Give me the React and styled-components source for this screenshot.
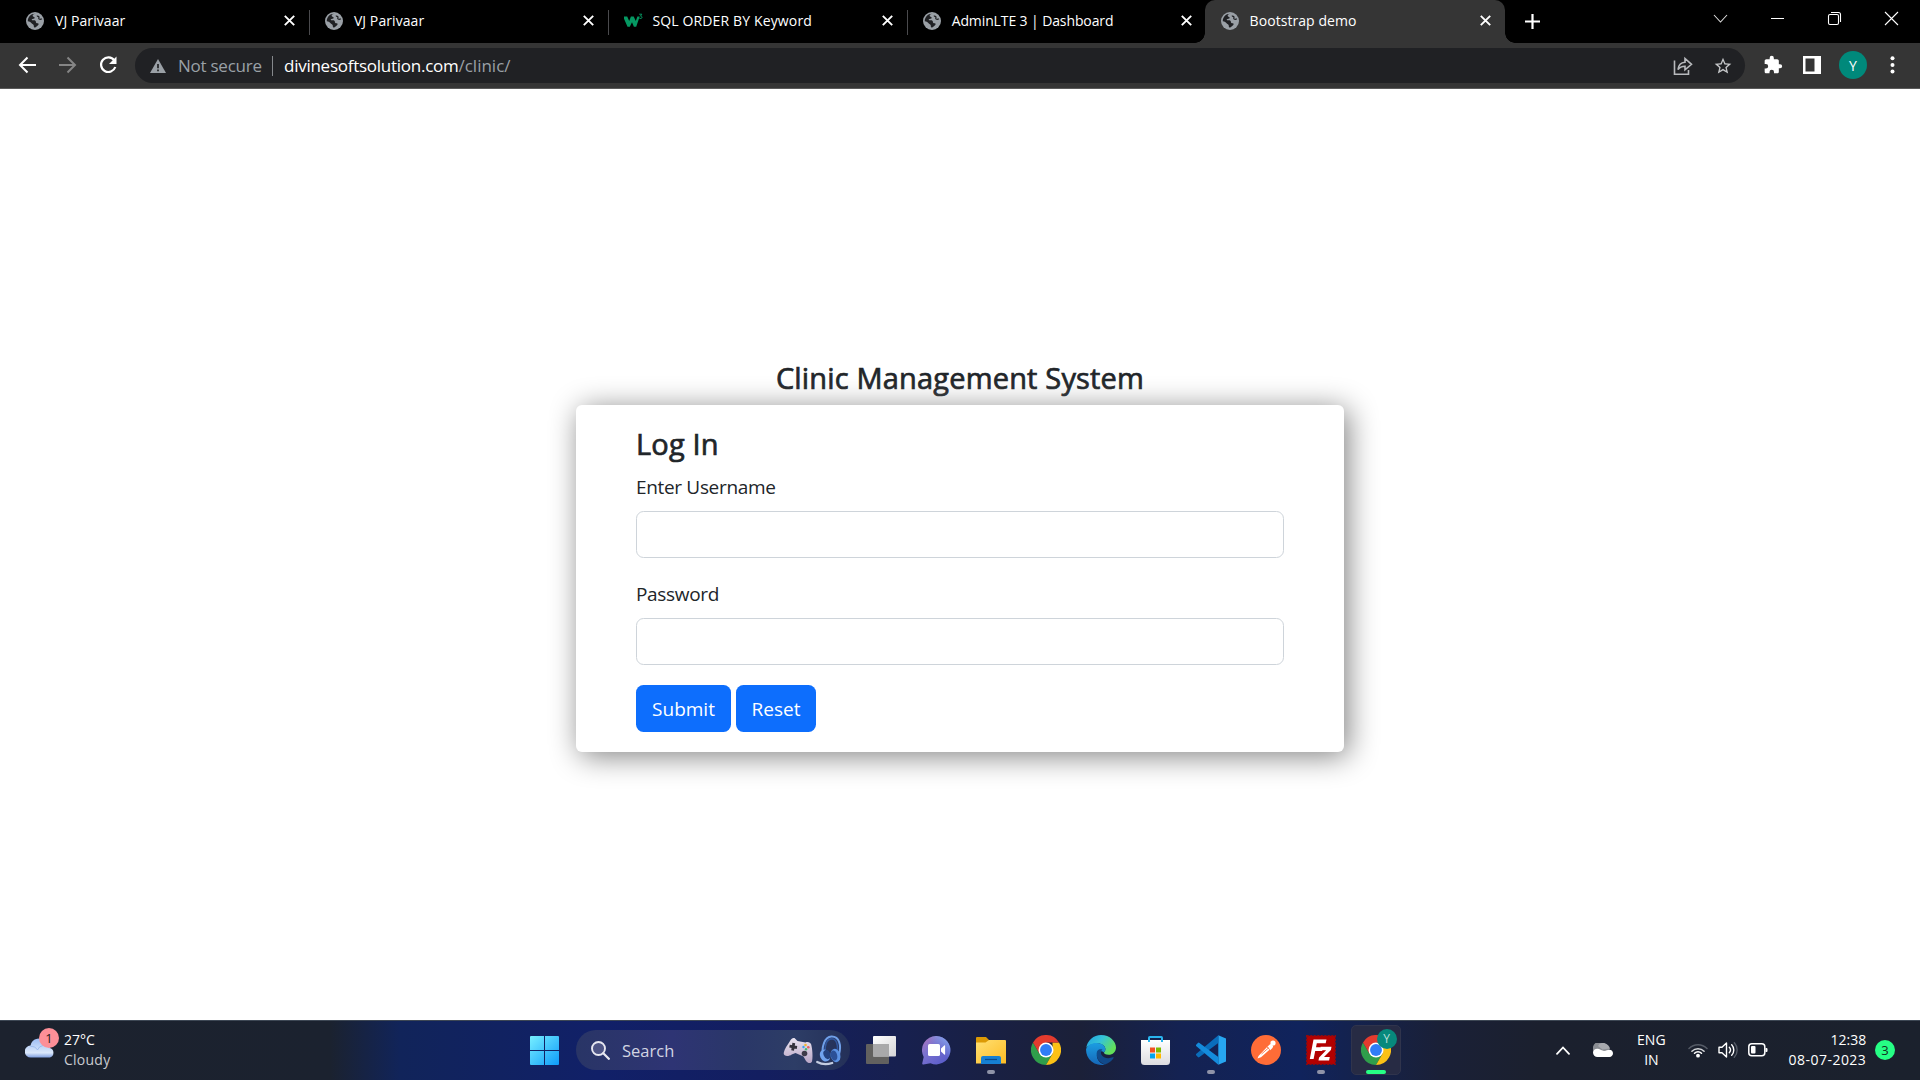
import React from "react";
import styled, { createGlobalStyle, css } from "styled-components";

const UI = '"Open Sans", "Noto Sans", sans-serif';

const GlobalStyle = createGlobalStyle`
  * { box-sizing: border-box; }
  html, body { margin: 0; padding: 0; background: #fff; }
  body { font-family: ${UI}; overflow: hidden; }
  svg { display: block; flex: none; }
`;

const Screen = styled.div`
  width: 1920px;
  height: 1080px;
  display: flex;
  flex-direction: column;
  overflow: hidden;
`;

const Label = styled.span`
  font-size: ${(p) => p.$size || 14}px;
  letter-spacing: ${(p) => p.$track || 0}px;
  color: ${(p) => p.$color || "#fff"};
  font-weight: ${(p) => p.$weight || 400};
  white-space: nowrap;
`;

/* ---------- tab strip ---------- */
const TabStrip = styled.div`
  height: 43px;
  background: #000;
  display: flex;
  padding-left: 9px;
  flex: none;
`;

const Tab = styled.div`
  width: 298.9px;
  height: 43px;
  display: flex;
  align-items: center;
  padding: 0 13px 2px 17px;
  position: relative;
  ${(p) => p.$active && css`
    width: 300px;
    padding-left: 16px;
    padding-right: 14px;
    background: #353535;
    border-radius: 10px 10px 0 0;
    &::before, &::after {
      content: "";
      position: absolute;
      bottom: 0;
      width: 10px;
      height: 10px;
    }
    &::before { left: -10px; background: radial-gradient(circle at 0 0, #000 9.5px, #353535 10px); }
    &::after { right: -10px; background: radial-gradient(circle at 100% 0, #000 9.5px, #353535 10px); }
  `}
`;

const TabTitle = styled(Label)`
  margin-left: ${(p) => p.$gap || 11}px;
  flex: 1;
  line-height: 20px;
`;

const TabDivider = styled.div`
  width: 1px;
  height: 25px;
  background: #4a4a4d;
  margin: 3px -15px 0 14px;
`;

const NewTab = styled.div`
  display: flex;
  align-items: center;
  margin-left: 20px;
  flex: 1;
`;

const WindowControls = styled.div`
  display: flex;
  padding: 11px 21.5px 0 0;
  gap: 42px;
`;

/* ---------- toolbar ---------- */
const Toolbar = styled.div`
  height: 46px;
  background: #353535;
  border-bottom: 1px solid #5a5a5a;
  display: flex;
  align-items: center;
  padding-left: 17px;
  flex: none;
`;

const NavButtons = styled.div`
  display: flex;
  gap: 20.3px;
  width: 118px;
  padding-bottom: 1px;
`;

const Omnibox = styled.div`
  width: 1610px;
  height: 35px;
  border-radius: 18px;
  background: #202124;
  display: flex;
  align-items: center;
  padding: 0 12px 0 15px;
`;

const Security = styled(Label)`
  margin-left: 12px;
  width: 83px;
`;

const OmniDivider = styled.div`
  width: 1px;
  height: 20px;
  background: #85888c;
  margin: 0 11px;
`;

const Url = styled.div`
  flex: 1;
  line-height: 24px;
  display: flex;
`;

const OmniActions = styled.div`
  display: flex;
  gap: 20px;
`;

const ToolActions = styled.div`
  display: flex;
  align-items: center;
  padding: 0 0 1px 18px;
  gap: 20px;
`;

const Avatar = styled.div`
  width: 28px;
  height: 28px;
  border-radius: 50%;
  background: #00897b;
  display: flex;
  align-items: center;
  justify-content: center;
  margin: 0 -3px 0 -2px;
`;

/* ---------- page ---------- */
const Page = styled.main`
  height: 931px;
  background: #fff;
  display: flex;
  flex-direction: column;
  align-items: center;
  padding-top: 270px;
  flex: none;
`;

const Heading = styled.h4`
  margin: 0 0 10px;
  padding-top: 1px;
  font-size: 29px;
  font-weight: 400;
  -webkit-text-stroke: 0.7px #212529;
  height: 36px;
  line-height: 36px;
  color: #212529;
  letter-spacing: 0.17px;
  white-space: nowrap;
`;

const Card = styled.form`
  width: 768px;
  height: 347px;
  padding: 20px 60px;
  border-radius: 6px;
  background: #fff;
  box-shadow: 4px 4px 30px gray;
`;

const FieldLabel = styled.label`
  display: block;
  font-size: 19px;
  height: 30px;
  line-height: 30px;
  padding-top: 1px;
  margin-bottom: 10px;
  color: #212529;
  letter-spacing: -0.33px;
`;

const Field = styled.input`
  display: block;
  width: 100%;
  height: 47px;
  border: 1px solid #ced4da;
  border-radius: 7.5px;
  margin: 0 0 20px;
  padding: 7px 15px;
  outline: none;
`;

const Buttons = styled.div`
  display: flex;
  gap: 5px;
`;

const Button = styled.button`
  width: ${(p) => p.$width}px;
  height: 47px;
  border: 0;
  padding: 0;
  border-radius: 7.5px;
  background: #0d6efd;
  color: #fff;
  font: 400 19px/30px ${UI};
`;

/* ---------- taskbar ---------- */
const Taskbar = styled.footer`
  height: 60px;
  border-top: 1px solid #3d4754;
  background: linear-gradient(90deg, #1c222e 0, #1b222f 330px, #11245a 400px, #112068 600px, #131e60 760px, #17204f 900px, #1b2038 1080px, #142252 1180px, #10235c 1300px, #1a2037 1440px, #1b202e 1540px, #1b212d 1920px);
  display: flex;
  flex: none;
`;

const Weather = styled.div`
  width: 517px;
  padding: 0 0 0 25px;
  display: flex;
`;

const WeatherIcon = styled.div`
  width: 39px;
  padding-top: 16px;
  position: relative;
`;

const AlertBadge = styled.div`
  position: absolute;
  left: 14px;
  top: 6.5px;
  width: 20px;
  height: 20px;
  border-radius: 50%;
  background: #fd8f98;
  color: #2a1a20;
  font-size: 13px;
  line-height: 20px;
  text-align: center;
`;

const TwoLines = styled.div`
  display: flex;
  flex-direction: column;
  align-items: ${(p) => p.$align || "center"};
  line-height: 20px;
  padding-top: 9px;
  margin-right: ${(p) => p.$after || 0}px;
`;

const Slot = styled.div`
  width: 55px;
  display: flex;
  align-items: center;
  justify-content: center;
  position: relative;
  padding-bottom: 1px;
`;

const ActiveTile = styled.div`
  width: 50px;
  height: 50px;
  border-radius: 5px;
  background: #272b44;
  border: 1px solid #30344c;
  display: flex;
  align-items: center;
  justify-content: center;
`;

const Indicator = styled.div`
  position: absolute;
  bottom: 6px;
  left: 50%;
  width: ${(p) => (p.$active ? 20 : 8)}px;
  height: 4px;
  transform: translateX(-50%);
  border-radius: 2px;
  background: ${(p) => (p.$active ? "#26ff85" : "#8f93a8")};
`;

const ProfileBadge = styled.div`
  position: absolute;
  left: 28px;
  top: 8px;
  width: 20px;
  height: 20px;
  border-radius: 50%;
  background: #07897c;
  color: #b9dfd9;
  font-size: 12px;
  line-height: 20px;
  text-align: center;
`;

const SearchBox = styled.div`
  width: 274px;
  height: 40px;
  margin: 9px 3.5px 0 4px;
  border-radius: 20px;
  background: linear-gradient(90deg, #293566 0, #2e3474 35%, #2a3768 60%, #2d3d66 80%, #243058 100%);
  display: flex;
  align-items: center;
  padding: 0 8px 0 15px;
`;

const SearchText = styled(Label)`
  margin-left: 12px;
  flex: 1;
  line-height: 24px;
  padding-top: 1px;
`;

const SearchArt = styled.div`
  display: flex;
  align-items: center;
  gap: 3px;
`;

const Tray = styled.div`
  display: flex;
  margin-left: auto;
  padding-right: 25px;
`;

const TrayIcon = styled.div`
  display: flex;
  align-items: center;
  padding-bottom: 1px;
  margin-right: ${(p) => p.$after || 0}px;
`;

const Count = styled.div`
  width: 20px;
  height: 20px;
  border-radius: 50%;
  background: #26ff85;
  color: #12301f;
  font-size: 13px;
  line-height: 20px;
  text-align: center;
`;

/* ---------- icons ---------- */
const Globe = () => (
  <svg width="18" height="18" viewBox="0 0 18 18">
    <circle cx="9" cy="9" r="9" fill="#9aa0a6" />
    <path d="M9.6 1.8c-1.8.2-3.3 1-2.9 2.3.3 1 1.5.5 1.9 1.4.4 1-.8 1.4-2 1.5-1.1.1-1 .9-.4 1.2.9.4 2.3-.2 3.2.6.8.7.2 1.7 1 2.2.7.4 1.7-.1 2.100.7.4.9-.6 1.600-1.300 2.300-.8.8-1.700 1.600-2.600 1.600-.9 0-.7-1.300-.9-2.300-.2-1-1.200-1.100-1.900-1.900-.8-.9-2.200-1.900-4-2.100C1.700 5.200 4.700 1.600 9.600 1.800z" fill="#202124" />
    <path d="M10.8 4.200c1-.3 2 .2 2.200 1 .2.7-.7 1.300.1 1.800.9.5 2.100.2 2.700-.2" fill="none" stroke="#202124" strokeWidth="1.3" />
  </svg>
);

const Cross = () => (
  <svg width="11" height="11" viewBox="0 0 11 11" stroke="#fff" strokeWidth="1.9">
    <path d="M.8.8l9.400 9.400M10.200.8L.8 10.200" />
  </svg>
);

const W3 = () => (
  <svg width="21" height="18" viewBox="0 0 21 18">
    <path d="M-1 4.500h4.200l2 4.500 1.700-4.500h2.800l2.100 4.500 1.600-4.500h2.300L12.200 14.800H9.900L8 10.300 5.800 14.800H3.500z" fill="#059862" />
    <path d="M15.200 2.200h2.600l-1.300 1.900c1.100 0 1.500.6 1.500 1.300 0 1.100-1.800 1.500-2.700.7" fill="none" stroke="#059862" strokeWidth="1" />
  </svg>
);

const Cloud = () => (
  <svg width="30" height="21" viewBox="0 0 30 21">
    <defs>
      <linearGradient id="cl" x1="0" y1="0" x2="0" y2="1">
        <stop offset="0" stopColor="#9dbdf3" />
        <stop offset=".75" stopColor="#dbe8fb" />
        <stop offset="1" stopColor="#7f9fe0" />
      </linearGradient>
    </defs>
    <path d="M6 20.500a6 6 0 0 1-.5-12A8.500 8.500 0 0 1 21 5.500a6 6 0 0 1 4 5.500 5 5 0 0 1 0 9.500z" fill="url(#cl)" />
    <path d="M5.500 9.500a7 7 0 0 1 7 3.500 7 7 0 0 1 12-2" fill="none" stroke="#8fb0ea" strokeWidth="1" opacity=".7" />
  </svg>
);

const WindowsLogo = () => (
  <svg width="29" height="29" viewBox="0 0 29 29">
    <defs>
      <linearGradient id="wl" x1="0" y1="0" x2="29" y2="29" gradientUnits="userSpaceOnUse">
        <stop offset="0" stopColor="#77efff" />
        <stop offset="1" stopColor="#0e9bfa" />
      </linearGradient>
    </defs>
    <path d="M1 0h13v14H0V1a1 1 0 0 1 1-1zM15 0h13a1 1 0 0 1 1 1v13H15zM0 15h14v14H1a1 1 0 0 1-1-1zM15 15h14v13a1 1 0 0 1-1 1H15z" fill="url(#wl)" />
  </svg>
);

const Magnifier = () => (
  <svg width="19" height="19" viewBox="0 0 19 19" fill="#4d5485" stroke="#e6e7f0">
    <circle cx="7.500" cy="7.500" r="6.500" strokeWidth="1.900" />
    <path d="M12.300 12.300l5.500 5.500" strokeWidth="2.300" strokeLinecap="round" />
  </svg>
);

const Gamepad = () => (
  <svg width="30" height="27" viewBox="0 0 30 27">
    <defs>
      <linearGradient id="gp" x1="0" y1="0" x2="0" y2="1">
        <stop offset="0" stopColor="#e9e3f0" />
        <stop offset="1" stopColor="#b9a6c6" />
      </linearGradient>
    </defs>
    <path d="M7 4c.8-2 2.500-3.500 4.500-3l3 3 8 1.500c2.500-1 5 0 5.700 2 1.200 5 1.800 12 .8 17-1.500 2.800-4.500 1.500-6 -.6l-2.500-4.500-8-3.300-3.800 1.300C6 19.500.5 19.800.7 16 1.600 11.500 4.500 8 7 4z" fill="url(#gp)" />
    <path d="M10.800 6l-1.200 7.500M6.500 9.200l7.500 1.300" stroke="#34323c" strokeWidth="2.800" />
    <circle cx="21.500" cy="16.500" r="2.800" fill="#3e3b49" />
    <circle cx="22.500" cy="8" r="1.300" fill="#f4b731" /><circle cx="25.300" cy="10.300" r="1.300" fill="#e45f5f" />
    <circle cx="20.500" cy="10" r="1.200" fill="#3aa0f0" /><circle cx="23" cy="12.300" r="1.200" fill="#43bb6d" />
  </svg>
);

const Headphones = () => (
  <svg width="26" height="31" viewBox="0 0 26 31" fill="none">
    <path d="M7 20C5.500 13 8 2 15.500 1.600c8-.2 10 9 7.500 18" stroke="#6f9fe8" strokeWidth="2" />
    <path d="M9 17C9 10 11 4 15.500 3.800c5 0 6.500 6 6 12" stroke="#31579f" strokeWidth="1.500" />
    <ellipse cx="9" cy="20.500" rx="5" ry="6.200" transform="rotate(-25 9 20.500)" fill="#6fa3ee" />
    <ellipse cx="11" cy="19.500" rx="3.300" ry="4.800" transform="rotate(-25 11 19.500)" fill="#23427f" />
    <ellipse cx="19.500" cy="20.500" rx="4.800" ry="6.800" transform="rotate(-15 19.500 20.500)" fill="#5c92e4" />
    <ellipse cx="18" cy="20.500" rx="3.200" ry="5.200" transform="rotate(-15 18 20.500)" fill="#2c5097" />
    <path d="M1.200 27c4 2.200 9 3 15 1" stroke="#c4cde0" strokeWidth="2.200" strokeLinecap="round" />
  </svg>
);

const TaskView = () => (
  <svg width="30" height="28" viewBox="0 0 30 28">
    <defs>
      <linearGradient id="tv" x1="0" y1="0" x2="1" y2="1">
        <stop offset="0" stopColor="#fff" /><stop offset="1" stopColor="#d4d4d6" />
      </linearGradient>
    </defs>
    <rect x="0" y="8" width="23" height="20" rx="1" fill="#62615f" />
    <rect x="7" y="0" width="23" height="20.500" rx="1" fill="url(#tv)" />
    <path d="M7 8h16v12.500H7z" fill="#a9a9aa" />
  </svg>
);

const Chat = () => (
  <svg width="29" height="29" viewBox="0 0 29 29">
    <defs>
      <linearGradient id="ch" x1="0" y1="0" x2="1" y2="1">
        <stop offset="0" stopColor="#b675b9" /><stop offset=".35" stopColor="#7c73cf" /><stop offset="1" stopColor="#5157c9" />
      </linearGradient>
      <linearGradient id="ch2" x1="0" y1="1" x2="1" y2="0">
        <stop offset=".55" stopColor="#7ea5ec" stopOpacity="0" /><stop offset="1" stopColor="#8db4f5" />
      </linearGradient>
    </defs>
    <path d="M14.500 0a14.200 14.200 0 1 1-6 27.200L1.500 28.500c-1 .1-1.400-.6-1.200-1.400L1.700 21A14.200 14.200 0 0 1 14.500 0z" fill="url(#ch)" />
    <path d="M14.500 0a14.200 14.200 0 1 1-6 27.200L1.500 28.500c-1 .1-1.400-.6-1.200-1.400L1.700 21A14.200 14.200 0 0 1 14.500 0z" fill="url(#ch2)" />
    <rect x="6" y="8" width="12" height="12" rx="1.600" fill="#fff" />
    <path d="M19 12.500l3.500-3.200c.3-.2.600 0 .6.400v8.600c0 .4-.3.600-.6.400L19 15.500z" fill="#fff" />
  </svg>
);

const Folder = () => (
  <svg width="30" height="27" viewBox="0 0 30 27">
    <defs>
      <linearGradient id="fo" x1="0" y1="0" x2="1" y2="1">
        <stop offset="0" stopColor="#ffe073" /><stop offset="1" stopColor="#fdbc24" />
      </linearGradient>
    </defs>
    <path d="M1 0h9l3.500 3.500L11 8H0V1a1 1 0 0 1 1-1z" fill="#dc9a05" />
    <path d="M0 5.500h9.500L13 3h16a1 1 0 0 1 1 1v22.500H0z" fill="url(#fo)" />
    <path d="M5 27v-6a2 2 0 0 1 2-2h16a2 2 0 0 1 2 2v6z" fill="#1680d3" />
    <path d="M9 22.500h12" stroke="#0a4b8c" strokeWidth="1.200" />
  </svg>
);

const ChromeLogo = () => (
  <svg width="30" height="30" viewBox="0 0 48 48">
    <path d="M3.200 12A24 24 0 0 0 24 48L34.400 30H24L13.600 30z" fill="#2f9e4b" />
    <path d="M44.800 12A24 24 0 0 1 24 48L34.400 30V12z" fill="#fbc116" />
    <path d="M24 12h20.800A24 24 0 0 0 3.200 12L13.600 30z" fill="#e33b2e" />
    <circle cx="24" cy="24" r="12" fill="#fff" />
    <circle cx="24" cy="24" r="9.500" fill="#2f7df6" />
  </svg>
);

const Edge = () => (
  <svg width="30" height="30" viewBox="0 0 30 30">
    <defs>
      <linearGradient id="e1" x1="0" y1="0" x2="1" y2=".5">
        <stop offset="0" stopColor="#1f9fe0" /><stop offset=".5" stopColor="#35c3d8" /><stop offset="1" stopColor="#63e05a" />
      </linearGradient>
      <linearGradient id="e2" x1="0" y1="0" x2="0" y2="1">
        <stop offset="0" stopColor="#1b9de2" /><stop offset="1" stopColor="#1667b8" />
      </linearGradient>
    </defs>
    <path d="M.2 13A15 15 0 0 1 15 0c9 0 15 6.500 15 12.500 0 4.500-3.300 7.300-7.300 7.300-3.300 0-5-1.200-4.700-2.300.2-.7 1.400-1.300 1.400-3.500 0-3-3.200-5.500-7.400-5.500C6.500 8.500 2 10.500.2 13z" fill="url(#e1)" />
    <path d="M.1 14C1.500 10 6 7.800 10.500 7.900c5 .1 8.900 2.800 8.900 6.100 0 2-1 2.600-1.400 3.500-3-3-8 0-7 4.500.8 4 4 7 8 7.400A15 15 0 0 1 .1 14z" fill="url(#e2)" />
    <path d="M11 16.500c-1.500 5 1.500 11 8 13 4-1.200 7-3.700 8.600-6.500.3-.6-.2-1-.8-.7-4 1.700-10 .8-11.500-2.800-1-2.500.3-4.300 1.200-4.900-2-.6-4.500-.3-5.500 1.900z" fill="#114a8b" />
  </svg>
);

const Store = () => (
  <svg width="30" height="29" viewBox="0 0 30 29">
    <defs>
      <linearGradient id="st" x1="0" y1="0" x2="0" y2="1">
        <stop offset="0" stopColor="#fff" /><stop offset="1" stopColor="#dcdce0" />
      </linearGradient>
    </defs>
    <path d="M0 4h29v21.500a3.500 3.500 0 0 1-3.500 3.500h-22A3.500 3.500 0 0 1 0 25.500z" fill="url(#st)" />
    <path d="M8 6V1.700a.7.7 0 0 1 .7-.7h11.600a.7.7 0 0 1 .7.7V6" fill="none" stroke="#29b4ee" strokeWidth="2" />
    <path d="M9 11.500h5v5H9z" fill="#f25022" /><path d="M15 11.500h5v5h-5z" fill="#7fba00" />
    <path d="M9 17.500h5v5H9z" fill="#00a4ef" /><path d="M15 17.500h5v5h-5z" fill="#ffb900" />
  </svg>
);

const VSCode = () => (
  <svg width="30" height="30" viewBox="0 0 30 30">
    <path d="M22.300.3L30 3.600v22.800l-7.700 3.400z" fill="#27a6f0" />
    <path d="M22.300.3v7.800L3.500 22.100a1.200 1.200 0 0 1-1.600 0L.4 20.600a1.200 1.200 0 0 1 0-1.800z" fill="#0a6dbb" />
    <path d="M22.300 29.800V21.900L3.500 7.900a1.200 1.200 0 0 0-1.600 0L.4 9.400a1.200 1.200 0 0 0 0 1.800z" fill="#148bdc" />
  </svg>
);

const Postman = () => (
  <svg width="30" height="30" viewBox="0 0 30 30">
    <circle cx="15" cy="15" r="15" fill="#ff6c37" />
    <path d="M6.500 23.500l1-2.500 8.800-9.300 2.700 2.500-9 8z" fill="#fff" />
    <path d="M16 12.500c1.500-2 3-3.500 4-3.500l2.200 2c0 1.500-1.500 3-3.200 4.200z" fill="#fff" />
    <circle cx="22" cy="8" r="2.600" fill="#fff" />
    <path d="M10.500 19l7.500-6.500M15.500 11.500l3.800 3.600" stroke="#ff6c37" strokeWidth=".8" />
  </svg>
);

const FileZilla = () => (
  <svg width="30" height="30" viewBox="0 0 30 30">
    <rect x=".8" y=".8" width="28.400" height="28.400" fill="#b30000" stroke="#8d0a10" strokeWidth="1.600" strokeDasharray="2 1.500" />
    <path d="M7.500 4.500h13l-.8 3.800h-8.900l-.8 4H17l-.8 3.600H9.200L7.600 24H3.800z" fill="#fff" />
    <path d="M14.500 11.800H25.500l-.6 3.200-6.900 7h5.800l-.7 3.500H12.500l.6-3 7-7.200h-5z" fill="#fff" />
  </svg>
);

const tabs = [
  { title: "VJ Parivaar", track: 0.08 },
  { title: "VJ Parivaar", track: 0.08 },
  { title: "SQL ORDER BY Keyword", track: 0.14, w3: true },
  { title: "AdminLTE 3 | Dashboard", track: -0.11, last: true },
];

const apps = [
  { Icon: TaskView },
  { Icon: Chat },
  { Icon: Folder, open: true },
  { Icon: ChromeLogo },
  { Icon: Edge },
  { Icon: Store },
  { Icon: VSCode, open: true },
  { Icon: Postman },
  { Icon: FileZilla, open: true },
];

export default function App() {
  return (
    <Screen>
      <GlobalStyle />
      <TabStrip>
        {tabs.map((t, i) => (
          <Tab key={i}>
            {t.w3 ? <W3 /> : <Globe />}
            <TabTitle $size={14} $track={t.track} $gap={t.w3 ? 7.6 : 11}>{t.title}</TabTitle>
            <Cross />
            {!t.last && <TabDivider />}
          </Tab>
        ))}
        <Tab $active>
          <Globe />
          <TabTitle $size={14} $track={0.06}>Bootstrap demo</TabTitle>
          <Cross />
        </Tab>
        <NewTab>
          <svg width="15" height="15" viewBox="0 0 15 15" stroke="#fff" strokeWidth="2.200"><path d="M7.500 0v15M0 7.500h15" /></svg>
        </NewTab>
        <WindowControls>
          <svg width="15" height="15" viewBox="0 0 15 15" fill="none" stroke="#ddd" strokeWidth="1.100"><path d="M1 4l6.500 7L14 4" /></svg>
          <svg width="15" height="15" viewBox="0 0 15 15" stroke="#fff" strokeWidth="1"><path d="M1 7.500h13" /></svg>
          <svg width="15" height="15" viewBox="0 0 15 15" fill="none" stroke="#fff" strokeWidth="1.100"><rect x="1.500" y="3.500" width="10" height="10" rx="1.500" /><path d="M4 1.500h7.500a2 2 0 0 1 2 2V11" /></svg>
          <svg width="15" height="15" viewBox="0 0 15 15" stroke="#fff" strokeWidth="1.100"><path d="M1 1l13 13M14 1L1 14" /></svg>
        </WindowControls>
      </TabStrip>

      <Toolbar>
        <NavButtons>
          <svg width="20" height="20" viewBox="0 0 20 20" fill="none" stroke="#fff" strokeWidth="2"><path d="M19 10H3.500M10.500 2.500L3 10l7.500 7.500" /></svg>
          <svg width="20" height="20" viewBox="0 0 20 20" fill="none" stroke="#858585" strokeWidth="2"><path d="M2 10h15.500M10.500 2.500L18 10l-7.500 7.500" /></svg>
          <svg width="20" height="20" viewBox="0 0 20 20"><path d="M16.300 5.400A7.300 7.300 0 1 0 17.300 12" fill="none" stroke="#fff" strokeWidth="2.200" /><path d="M18.500 1.500v7.500H11z" fill="#fff" /></svg>
        </NavButtons>
        <Omnibox>
          <svg width="16" height="14" viewBox="0 0 16 14"><path d="M8 0l8 14H0z" fill="#9aa0a6" /><path d="M8 5v4.200M8 10.400v1.800" stroke="#202124" strokeWidth="1.700" /></svg>
          <Security $size={17} $track={-0.25} $color="#9aa0a6">Not secure</Security>
          <OmniDivider />
          <Url>
            <Label $size={17} $track={-0.26}>divinesoftsolution.com</Label>
            <Label $size={17} $color="#9aa0a6">/clinic/</Label>
          </Url>
          <OmniActions>
            <svg width="20" height="20" viewBox="0 0 20 20" fill="none" stroke="#b8babd" strokeWidth="1.600"><path d="M1.500 4.500v13.700h14V14" /><path d="M5 13.500c.5-4.500 3-7 7-7.300V2.500l6.500 5.800-6.500 5.500v-3.600c-3.500 0-5.500 1.100-7 3.300z" /></svg>
            <svg width="20" height="20" viewBox="0 0 24 24" fill="#c4c6c8"><path d="M22 9.240l-7.190-.62L12 2 9.190 8.630 2 9.240l5.460 4.730L5.820 21 12 17.270 18.180 21l-1.630-7.030L22 9.240zM12 15.400l-3.760 2.270 1-4.280-3.320-2.880 4.380-.38L12 6.100l1.710 4.040 4.380.38-3.320 2.880 1 4.280L12 15.400z" /></svg>
          </OmniActions>
        </Omnibox>
        <ToolActions>
          <svg width="20" height="20" viewBox="0 0 24 24" fill="#fff"><path d="M20.500 11H19V7c0-1.100-.9-2-2-2h-4V3.500a2.500 2.500 0 0 0-5 0V5H4c-1.100 0-2 .9-2 2v3.800h1.500a2.700 2.700 0 0 1 0 5.400H2V20c0 1.100.9 2 2 2h3.800v-1.500a2.700 2.700 0 0 1 5.400 0V22H17c1.100 0 2-.9 2-2v-4h1.500a2.500 2.500 0 0 0 0-5z" /></svg>
          <svg width="18" height="18" viewBox="0 0 18 18"><path fill="#fff" d="M0 0h18v18H0z" /><path fill="#353535" d="M2.500 2.500h9v13h-9z" /></svg>
          <Avatar><Label $size={14}>Y</Label></Avatar>
          <svg width="18" height="18" viewBox="0 0 18 18" fill="#fff"><circle cx="8.500" cy="2.300" r="2" /><circle cx="8.500" cy="9" r="2" /><circle cx="8.500" cy="15.500" r="2" /></svg>
        </ToolActions>
      </Toolbar>

      <Page>
        <Heading>Clinic Management System</Heading>
        <Card>
          <Heading>Log In</Heading>
          <FieldLabel>Enter Username</FieldLabel>
          <Field type="text" />
          <FieldLabel>Password</FieldLabel>
          <Field type="password" />
          <Buttons>
            <Button type="button" $width={95}>Submit</Button>
            <Button type="button" $width={80}>Reset</Button>
          </Buttons>
        </Card>
      </Page>

      <Taskbar>
        <Weather>
          <WeatherIcon>
            <Cloud />
            <AlertBadge>1</AlertBadge>
          </WeatherIcon>
          <TwoLines $align="flex-start">
            <Label $size={14}>27°C</Label>
            <Label $size={14} $track={0.25} $color="#c9cbcf">Cloudy</Label>
          </TwoLines>
        </Weather>
        <Slot><WindowsLogo /></Slot>
        <SearchBox>
          <Magnifier />
          <SearchText $size={16.5} $color="#d2d5e2">Search</SearchText>
          <SearchArt>
            <Gamepad />
            <Headphones />
          </SearchArt>
        </SearchBox>
        {apps.map(({ Icon, open }, i) => (
          <Slot key={i}>
            <Icon />
            {open && <Indicator />}
          </Slot>
        ))}
        <Slot>
          <ActiveTile><ChromeLogo /></ActiveTile>
          <ProfileBadge>Y</ProfileBadge>
          <Indicator $active />
        </Slot>
        <Tray>
          <TrayIcon $after={23}>
            <svg width="14" height="9" viewBox="0 0 14 9" fill="none" stroke="#fff" strokeWidth="1.800" strokeLinecap="round"><path d="M1 7.800L7 1.500l6 6.300" /></svg>
          </TrayIcon>
          <TrayIcon $after={23.5}>
            <svg width="20" height="14" viewBox="0 0 20 14">
              <path d="M1 9a6.500 6.500 0 0 1 11-7.500A5 5 0 0 1 17 6l-8 5z" fill="#8a8d93" />
              <path d="M5 3a5 5 0 0 1 5-3c3.500 0 6 2.500 6.500 5.500l-7 1z" fill="#a7a9ae" />
              <path d="M0 9.500C0 7 2.500 5.300 5 5.700c2.200.4 4 2 6 2.300 2.500-.3 3.500-1.500 5.500-1.300 2 .2 3.500 1.500 3.500 3.600 0 2-1.500 3.700-3.500 3.700H4.500C2 14 0 12 0 9.500z" fill="#fff" />
            </svg>
          </TrayIcon>
          <TwoLines $after={22.5}>
            <Label $size={14} $track={0.1}>ENG</Label>
            <Label $size={14}>IN</Label>
          </TwoLines>
          <TrayIcon $after={10}>
            <svg width="20" height="16" viewBox="0 0 20 16" fill="none" strokeWidth="1.500" strokeLinecap="round">
              <path d="M1 6.500a12.700 12.700 0 0 1 18 0" stroke="#555b66" />
              <path d="M3.900 9.300a8.600 8.600 0 0 1 12.200 0" stroke="#d5d7da" />
              <path d="M6.500 11.300a5 5 0 0 1 7 0" stroke="#fff" />
              <circle cx="10" cy="13.700" r="1.900" fill="#fff" />
            </svg>
          </TrayIcon>
          <TrayIcon $after={10}>
            <svg width="20" height="18" viewBox="0 0 20 18" fill="none" stroke="#fff" strokeWidth="1.400" strokeLinecap="round" strokeLinejoin="round">
              <path d="M1 6.300h3L8.500 2v14L4 11.700H1z" /><path d="M11.300 6.300a4 4 0 0 1 0 5.400M13.700 3.800a7.500 7.500 0 0 1 0 10.400" /><path d="M16.300 1.800a10.500 10.500 0 0 1 0 14.400" stroke="#555b66" />
            </svg>
          </TrayIcon>
          <TrayIcon $after={20.3}>
            <svg width="20" height="14" viewBox="0 0 20 14"><rect x=".8" y=".8" width="16" height="12" rx="3" fill="none" stroke="#fff" strokeWidth="1.500" /><rect x="3" y="3" width="4.500" height="7.500" rx="1" fill="#fff" /><path d="M17.500 5h1a1 1 0 0 1 1 1v2a1 1 0 0 1-1 1h-1z" fill="#fff" /></svg>
          </TrayIcon>
          <TwoLines $align="flex-end" $after={8.7}>
            <Label $size={14}>12:38</Label>
            <Label $size={14} $track={0.47}>08-07-2023</Label>
          </TwoLines>
          <TrayIcon>
            <Count>3</Count>
          </TrayIcon>
        </Tray>
      </Taskbar>
    </Screen>
  );
}
